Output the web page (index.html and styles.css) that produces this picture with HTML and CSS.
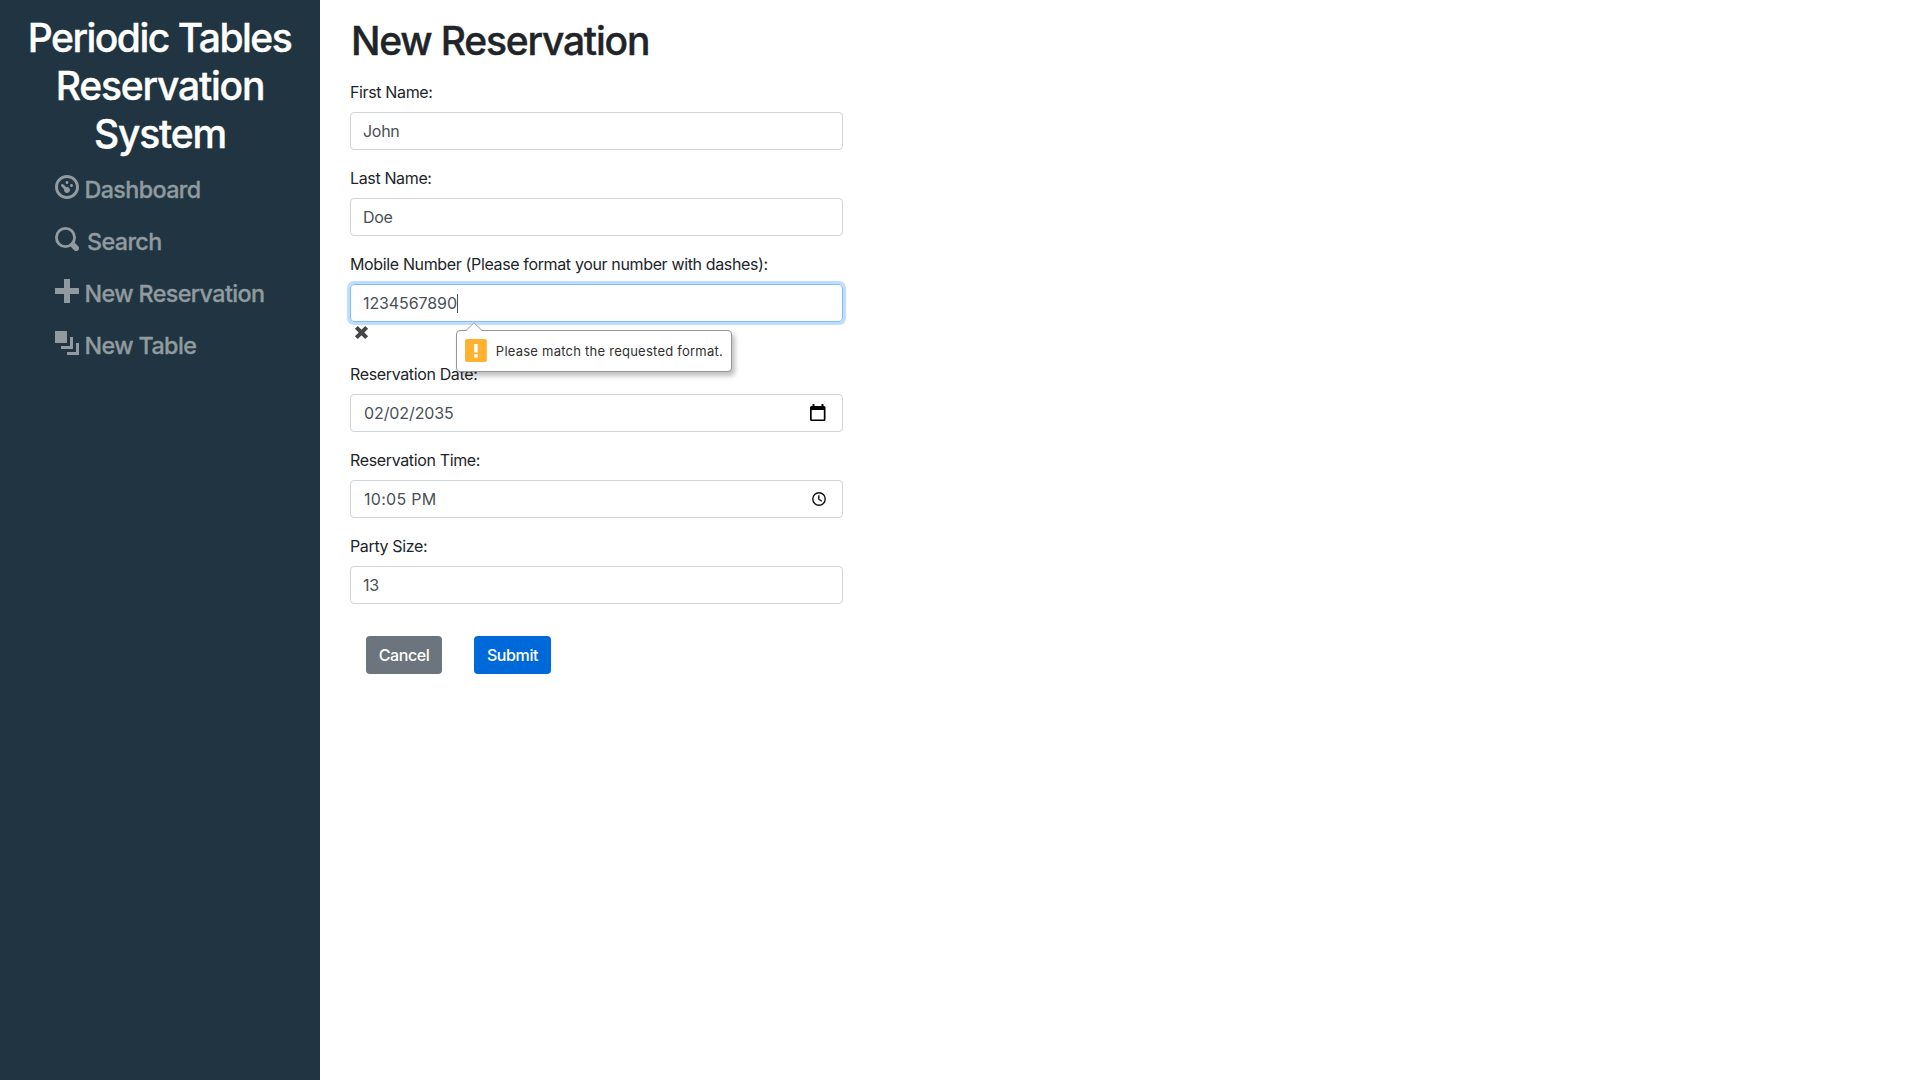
FILE: index.html
```html
<!DOCTYPE html>
<html lang="en">
<head>
<meta charset="utf-8">
<title>New Reservation</title>
<link rel="stylesheet" href="styles.css">
</head>
<body>
<div class="layout">
  <nav class="sidebar">
    <h1 class="brand"><span class="brand-first">Periodic Tables</span> <span>Reservation System</span></h1>
    <ul class="menu">
      <li><svg viewBox="0 0 8 8"><path fill-rule="evenodd" d="M4 0c-2.2 0-4 1.8-4 4s1.8 4 4 4 4-1.8 4-4-1.8-4-4-4zm0 1c1.66 0 3 1.34 3 3s-1.34 3-3 3-3-1.34-3-3 1.34-3 3-3zM4 2c-.28 0-.5.22-.5.5s.22.5.5.5.5-.22.5-.5-.22-.5-.5-.5zM2.34 3a.5.5 0 0 0-.19.84l.91.91c-.02.08-.06.16-.06.25 0 .55.45 1 1 1s1-.45 1-1-.45-1-1-1c-.09 0-.17.04-.25.06l-.91-.91a.5.5 0 0 0-.5-.15zm3.16 0c-.28 0-.5.22-.5.5s.22.5.5.5.5-.22.5-.5-.22-.5-.5-.5z"/></svg><span>Dashboard</span></li>
      <li class="wide"><svg viewBox="0 0 24 24"><circle cx="10.5" cy="10.5" r="9.1" fill="none" stroke="currentColor" stroke-width="2.8"/><path d="M17.8 17.8L21.2 21.2" stroke="currentColor" stroke-width="5.6" stroke-linecap="round"/></svg><span>Search</span></li>
      <li><svg viewBox="0 0 8 8"><path d="M3 0v3h-3v2h3v3h2v-3h3v-2h-3v-3h-2z"/></svg><span>New Reservation</span></li>
      <li><svg viewBox="0 0 8 8"><path d="M0 0v4h4v-4h-4zm5 2v3h-3v1h4v-4h-1zm2 2v3h-3v1h4v-4h-1z"/></svg><span>New Table</span></li>
    </ul>
  </nav>
  <main class="content">
    <h1 class="title">New Reservation</h1>
    <form class="form">
      <div class="field"><label>First Name:</label><div class="control"><span>John</span></div></div>
      <div class="field"><label>Last Name:</label><div class="control"><span>Doe</span></div></div>
      <div class="field mobile">
        <label>Mobile Number (Please format your number with dashes):</label>
        <div class="control focused"><span class="digits">1234567890</span><i class="caret"></i></div>
        <svg class="invalid" viewBox="0 0 14 14"><path d="M2.2 2.2L11.8 11.8M11.8 2.2L2.2 11.8"/></svg>
        <div class="tooltip">
          <svg class="arrow" viewBox="0 0 18 9"><path class="arrow-fill" d="M1 9L9 1L17 9Z"/><path class="arrow-line" d="M1 8.5L9 .8L17 8.5"/></svg>
          <svg class="warn" viewBox="0 0 22 23"><rect width="22" height="23" rx="2"/><path d="M9.2 5h3.6v8.5h-3.6zM9.2 15.3h3.6v3.2h-3.6z"/></svg>
          <span>Please match the requested format.</span>
        </div>
      </div>
      <div class="field"><label>Reservation Date:</label><div class="control picker"><span class="digits">02/02/2035</span>
        <svg class="calendar" viewBox="0 0 16 18"><path fill-rule="evenodd" d="M2.5 0h2v2h7v-2h2v2h.5a1.5 1.5 0 0 1 1.5 1.5v12a1.5 1.5 0 0 1-1.5 1.5h-12.5a1.5 1.5 0 0 1-1.5-1.5v-12a1.5 1.5 0 0 1 1.5-1.5h1zM1.7 6v9.5h12.1v-9.5z"/></svg></div></div>
      <div class="field"><label>Reservation Time:</label><div class="control picker"><span class="time">10:05 PM</span>
        <svg class="clock" viewBox="0 0 14 14"><circle cx="7" cy="7" r="6.2"/><path d="M6.8 3.2V7.2L9.8 9.3"/></svg></div></div>
      <div class="field"><label>Party Size:</label><div class="control"><span>13</span></div></div>
      <div class="actions"><button type="button" class="btn cancel">Cancel</button><button type="button" class="btn submit">Submit</button></div>
    </form>
  </main>
</div>
</body>
</html>
```
FILE: styles.css
```css
* { box-sizing: border-box; }
body { margin: 0; font: 400 16px/24px Inter, "Liberation Sans", sans-serif; color: #212529; background: #fff; }
.layout { display: flex; height: 1080px; overflow: hidden; }
.sidebar { width: 320px; padding: 14px 16px; background: #203541; }
.brand { margin: 0; font-size: 39px; line-height: 48px; font-weight: 500; color: #fff; text-align: center; letter-spacing: -1.2px; }
.brand span { display: block; padding: 0 20px; }
.brand .brand-first { padding: 0 1px 0 0; white-space: nowrap; letter-spacing: -1.5px; }
.menu { list-style: none; margin: 0; padding: 17px 0 0 39px; color: #909a9f; font-size: 23.3px; font-weight: 500; letter-spacing: -.6px; -webkit-text-stroke: .3px currentColor; }
.menu li { display: flex; height: 52px; gap: 5.5px; white-space: nowrap; }
.menu .wide { gap: 8px; }
.menu svg { width: 24px; height: 24px; flex: none; fill: currentColor; }
.menu span { line-height: 30px; }
.content { padding: 17px 0 0 30px; }
.title { margin: 0 0 15px; padding-left: 1px; font-size: 39px; line-height: 48px; font-weight: 500; letter-spacing: -1.2px; }
.brand, .title { -webkit-text-stroke: .4px currentColor; }
.form { width: 493px; }
.field { height: 86px; }
.mobile { height: 110px; position: relative; }
label { display: block; height: 32px; letter-spacing: -.36px; }
.control { display: flex; align-items: center; height: 38px; padding: 0 12px; border: 1px solid #ced4da; border-radius: 4px; color: #495057; letter-spacing: -.3px; }
.focused { border-color: #80bdff; box-shadow: 0 0 0 3px #bfdeff; }
.digits { letter-spacing: -.1px; }
.time { letter-spacing: .3px; }
.caret { width: 1px; height: 19px; background: #495057; }
.picker { justify-content: space-between; padding-left: 13px; }
.calendar { width: 16px; height: 18px; margin-right: 4px; }
.clock { width: 14px; height: 14px; margin-right: 4px; fill: none; stroke: #111; stroke-width: 1.4; }
.invalid { display: block; width: 15px; height: 15px; margin: 3px 0 0 4px; stroke: #454545; stroke-width: 3.8; }
.tooltip { position: absolute; left: 106px; top: 78px; width: 276px; height: 42px; display: flex; align-items: center; gap: 9px; padding: 0 8px 1px; background: #fff; border: 1px solid #969696; border-radius: 4px; box-shadow: 3px 4px 5px rgba(0,0,0,.25); font-size: 13px; letter-spacing: .24px; color: #303030; white-space: nowrap; }
.arrow { position: absolute; left: 8px; top: -9px; width: 18px; height: 9px; }
.arrow-fill { fill: #fff; }
.arrow-line { fill: none; stroke: #a0a0a0; }
.warn { width: 22px; height: 23px; fill: #ffb22f; }
.warn path { fill: #fff; }
.actions { display: flex; gap: 32px; padding: 16px 0 0 16px; }
.btn { height: 38px; padding: 0; border: 0; border-radius: 4px; font: 500 16px/24px Inter, sans-serif; color: #fff; letter-spacing: -.4px; }
.cancel { width: 76px; background: #6c757d; }
.submit { width: 77px; background: #0069d9; }
```
